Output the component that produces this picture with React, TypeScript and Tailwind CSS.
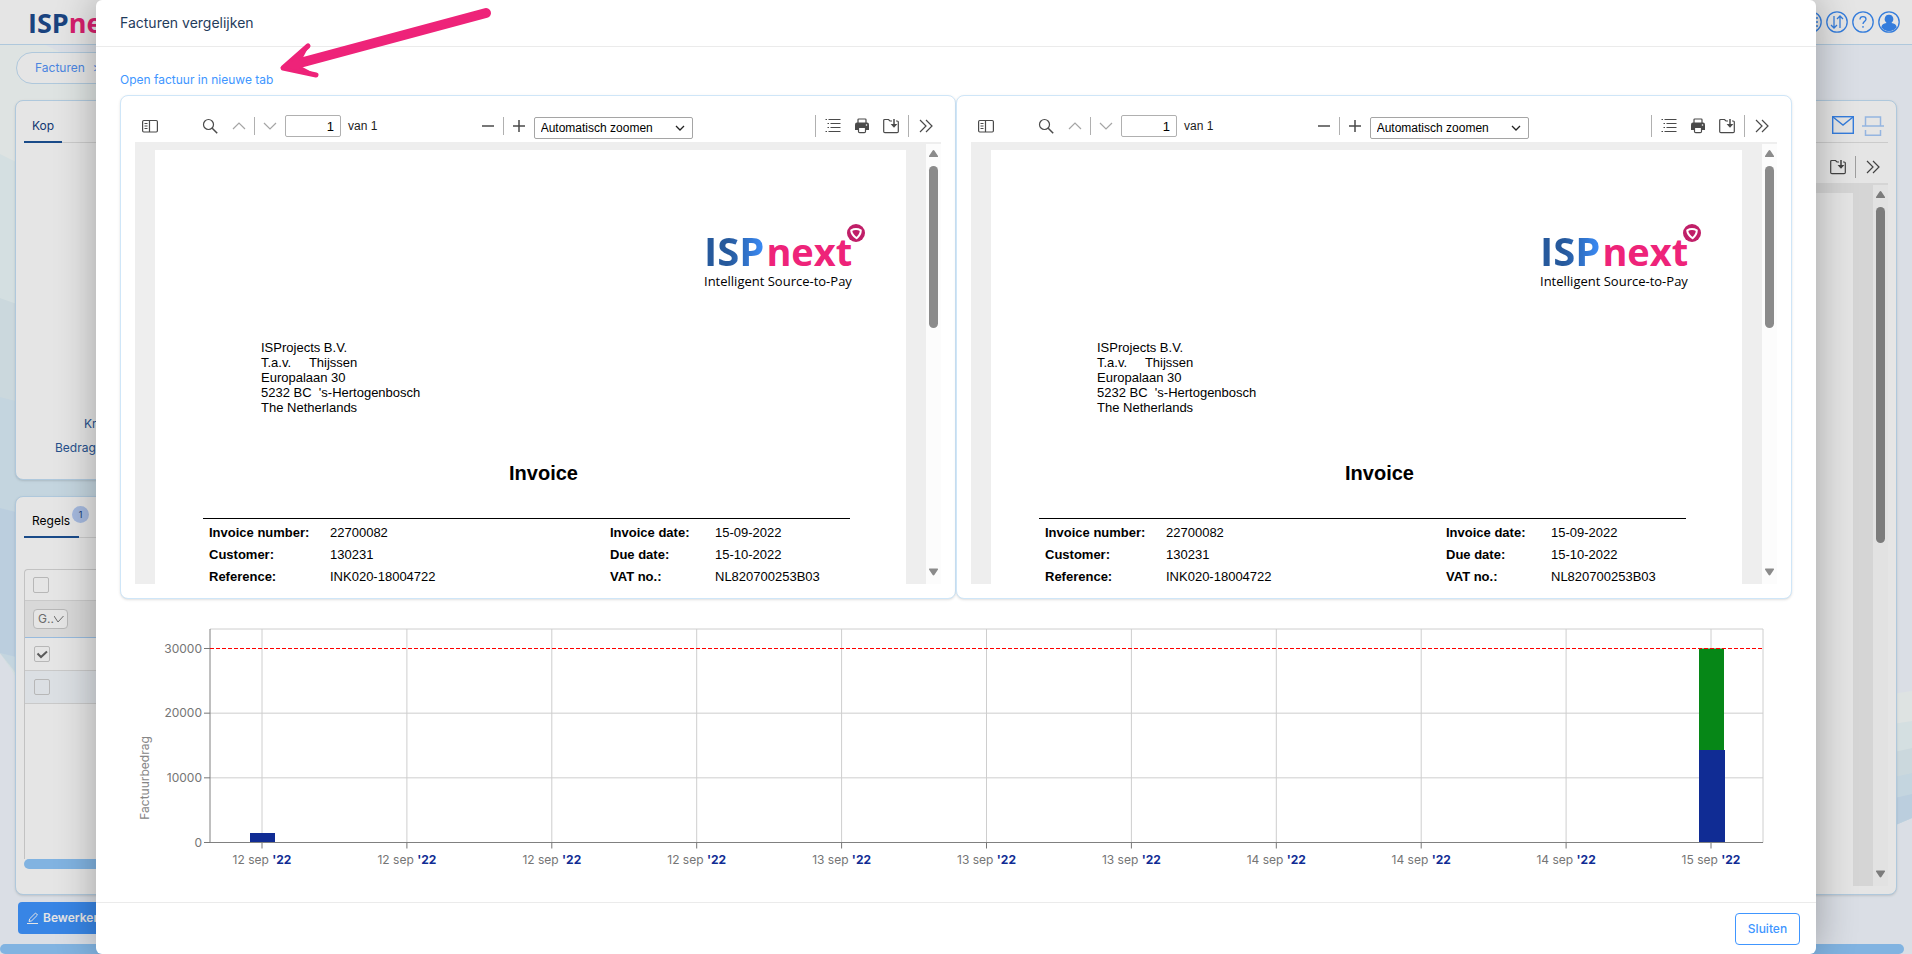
import { useId } from "react"
import type { ReactNode } from "react"

const CHART = { left: 90, right: 1643, top: 18, base: 231.5, step: 194 / 3 }

const TICKS = ["12", "12", "12", "12", "13", "13", "13", "14", "14", "14", "15"]

const ADDRESS = [
  "ISProjects B.V.",
  "T.a.v.     Thijssen",
  "Europalaan 30",
  "5232 BC  's-Hertogenbosch",
  "The Netherlands",
]

const DETAILS = [
  ["Invoice number:", "22700082", "Invoice date:", "15-09-2022"],
  ["Customer:", "130231", "Due date:", "15-10-2022"],
  ["Reference:", "INK020-18004722", "VAT no.:", "NL820700253B03"],
]

interface IconProps {
  children: ReactNode
  className?: string
}

/** 16px stroked icon as used in the pdf toolbar */
function Icon({ children, className = "h-4 w-4 text-[#4a4a4a]" }: IconProps) {
  return (
    <svg viewBox="0 0 16 16" fill="none" stroke="currentColor" strokeWidth="1.2" className={className} aria-hidden="true">
      {children}
    </svg>
  )
}

function ChevronsIcon() {
  return (
    <Icon>
      <path d="M2 2l6 6-6 6M8 2l6 6-6 6" />
    </Icon>
  )
}

function SaveIcon() {
  return (
    <Icon>
      <path d="M9 3H7L5.500 1.500H1.700Q.7 1.500.7 2.500v11q0 1.200 1.200 1.200h12.200q1.200 0 1.200-1.200V4.200Q15.300 3 14.100 3H13" />
      <path d="M11 1v7" strokeWidth="1.500" />
      <path d="M7.600 6h6.800L11 9.800z" fill="currentColor" stroke="none" />
    </Icon>
  )
}

function ToolButton({ label, children }: { label: string; children: ReactNode }) {
  return (
    <button type="button" aria-label={label} className="flex h-6 w-4 shrink-0 items-center justify-center">
      {children}
    </button>
  )
}

function Separator({ className = "h-[18px]" }: { className?: string }) {
  return <span className={`w-px shrink-0 bg-[#b0b0b0] ${className}`} />
}

/** Scroll track with arrows, thumb size is passed in as a class */
function ScrollTrack({ thumb }: { thumb: string }) {
  return (
    <div className="mt-0.5 flex w-[15px] shrink-0 flex-col items-center justify-between bg-[#fcfcfc] pt-1.5 pb-2">
      <div className="flex flex-col items-center gap-2">
        <svg viewBox="0 0 9 8" className="h-2 w-[9px]" aria-hidden="true">
          <path d="M4.500 0Q5 0 5.500.8L9 6v.5q0 .5-.5.5h-8Q0 7 0 6.500V6L3.500.8Q4 0 4.500 0z" fill="#8b8b8b" />
        </svg>
        <div className={`w-[9px] rounded-full bg-[#8b8b8b] ${thumb}`} />
      </div>
      <svg viewBox="0 0 9 8" className="h-2 w-[9px]" aria-hidden="true">
        <path d="M4.500 7.500Q5 7.500 5.500 6.700L9 1.500V1Q9 .5 8.500.5h-8Q0 .5 0 1v.5l3.500 5.200Q4 7.500 4.500 7.500z" fill="#8b8b8b" />
      </svg>
    </div>
  )
}

function InvoiceLogo() {
  return (
    <div className="relative w-[165px] pt-[9px] font-['Open_Sans']">
      <div className="flex items-baseline gap-0.5 font-bold">
        <span className="bg-linear-to-r from-[#26599c] from-40% to-[#3b8cf8] bg-clip-text text-[40px] leading-10 text-transparent">
          ISP
        </span>
        <span className="text-[38px] leading-10 text-[#ee2379]">next</span>
      </div>
      <p className="mt-0.5 text-[13px] leading-4 font-medium">Intelligent Source-to-Pay</p>
      <svg viewBox="0 0 18 18" className="absolute top-0.5 right-1 h-[18px] w-[18px]" aria-hidden="true">
        <circle cx="9" cy="9" r="9" fill="#c01f68" />
        <path d="M4.200 6.300q4.800-2.400 9.600 0 0 4.500-4.200 8-5-3.500-5.400-8z" fill="none" stroke="#fff" strokeWidth="2" strokeLinejoin="round" />
      </svg>
    </div>
  )
}

/** Toolbar above the previewed document */
function PdfToolbar() {
  const pageId = useId()
  return (
    <div className="flex h-8 items-center justify-between px-[7px] font-['Liberation_Sans',sans-serif] text-[12px] text-[#1c1c1c]">
      <div className="flex items-center">
        <ToolButton label="Zijbalk">
          <Icon>
            <rect x=".6" y="2.500" width="14.800" height="11.500" rx="1.200" />
            <path d="M7.500 2.500V14M2.500 5.500h3M2.500 8h3M2.500 10.500h3" />
          </Icon>
        </ToolButton>
        <div className="ml-11 flex items-center gap-[13px]">
          <ToolButton label="Zoeken">
            <Icon>
              <circle cx="6.500" cy="6.500" r="5" />
              <path d="M10.200 10.200l5 5" strokeWidth="1.500" />
            </Icon>
          </ToolButton>
          <ToolButton label="Vorige">
            <Icon className="h-4 w-4 text-[#a5a5a5]">
              <path d="M2 11l6-6 6 6" />
            </Icon>
          </ToolButton>
        </div>
        <div className="ml-[7px] flex items-center gap-[7px]">
          <Separator />
          <ToolButton label="Volgende">
            <Icon className="h-4 w-4 text-[#a5a5a5]">
              <path d="M2 5l6 6 6-6" />
            </Icon>
          </ToolButton>
          <input
            id={pageId}
            defaultValue="1"
            className="h-[22px] w-14 rounded-xs border border-[#b0b0b0] px-1.5 text-right text-[13px] text-black"
          />
          <label htmlFor={pageId}>van 1</label>
        </div>
      </div>
      <div className="mr-5 flex items-center gap-[7px]">
        <ToolButton label="Uitzoomen">
          <Icon>
            <path d="M2 8h12" strokeWidth="1.500" />
          </Icon>
        </ToolButton>
        <Separator />
        <ToolButton label="Inzoomen">
          <Icon>
            <path d="M2 8h12M8 2v12" strokeWidth="1.500" />
          </Icon>
        </ToolButton>
        <div className="relative mt-1">
          <select
            aria-label="Zoom"
            className="block h-[22px] w-[159px] appearance-none rounded-xs border border-[#a5a5a5] bg-white pl-1.5 text-[12px] text-black"
          >
            <option>Automatisch zoomen</option>
          </select>
          <svg viewBox="0 0 10 6" className="absolute top-2 right-2 h-1.5 w-2.5" fill="none" stroke="#222" strokeWidth="1.300" aria-hidden="true">
            <path d="M1 1l4 4 4-4" />
          </svg>
        </div>
      </div>
      <div className="flex items-center gap-[9px]">
        <Separator className="h-[22px]" />
        <ToolButton label="Lijst">
          <Icon>
            <path d="M3.500 1.500h12M5.500 5.500h10M5.500 9.500h10M3.500 13.500h12" />
            <path d="M.5 1.500h1.500M2.500 5.500H4M2.500 9.500H4M.5 13.500h1.500" />
          </Icon>
        </ToolButton>
        <span className="mx-1 flex items-center">
          <ToolButton label="Afdrukken">
            <Icon>
              <path d="M4 5V1.800q0-.8.8-.8h6.400q.8 0 .8.800V5" fill="white" />
              <path d="M3 4.500h10q2 0 2 2V12H1V6.500q0-2 2-2z" fill="currentColor" stroke="none" />
              <path d="M4.500 9.500v4q0 1.200 1.200 1.200h4.600q1.200 0 1.200-1.200v-4z" fill="white" />
              <circle cx="12.500" cy="7" r=".8" fill="#fff" stroke="none" />
            </Icon>
          </ToolButton>
        </span>
        <ToolButton label="Opslaan">
          <SaveIcon />
        </ToolButton>
        <Separator className="h-[22px]" />
        <ToolButton label="Meer">
          <ChevronsIcon />
        </ToolButton>
      </div>
    </div>
  )
}

function InvoicePreview() {
  return (
    <section className="min-w-0 flex-1 rounded-lg border border-[#cfe6f8] bg-white p-3.5 shadow-sm">
      <PdfToolbar />
      <div className="flex h-[442px] overflow-hidden bg-[#eeeeee] pl-5">
        <article className="mt-2 mr-5 flex-1 bg-white font-['Liberation_Sans',sans-serif] text-[13px] leading-[15px] text-black">
          <div className="flex h-36 justify-end pt-[72px] pr-[37px]">
            <InvoiceLogo />
          </div>
          <address className="mt-[46px] ml-[106px] whitespace-pre not-italic">
            {ADDRESS.map((line) => (
              <div key={line}>{line}</div>
            ))}
          </address>
          <h2 className="mt-11 pl-[26px] text-center text-xl font-bold">Invoice</h2>
          <div className="mr-14 ml-12 mt-[31px] border-t border-black pt-[3px]">
            <table className="w-full text-left leading-4">
              <tbody>
                {DETAILS.map((row) => (
                  <tr key={row[0]}>
                    <th className="w-[127px] px-0 py-[3px] pl-1.5 font-bold">{row[0]}</th>
                    <td className="w-[280px] px-0 py-[3px]">{row[1]}</td>
                    <th className="w-[105px] px-0 py-[3px] font-bold">{row[2]}</th>
                    <td className="px-0 py-[3px]">{row[3]}</td>
                  </tr>
                ))}
              </tbody>
            </table>
          </div>
        </article>
        <ScrollTrack thumb="h-[162px]" />
      </div>
    </section>
  )
}

/** Stacked bar chart with invoice amounts per moment */
function AmountChart() {
  const y = (amount: number) => CHART.base - (amount / 10000) * CHART.step
  const x = (index: number) => 142 + index * 144.9
  return (
    <svg viewBox="0 0 1672 270" className="w-full font-['Inter',sans-serif]" fontSize="12" role="img" aria-label="Factuurbedrag">
      {/* grid */}
      <g stroke="#cecece">
        <path d={`M${CHART.left} ${CHART.top}H${CHART.right}V${CHART.base}`} fill="none" />
        {[10000, 20000].map((v) => (
          <path key={v} d={`M${CHART.left} ${y(v)}H${CHART.right}`} />
        ))}
        {TICKS.map((_, i) => (
          <path key={i} d={`M${x(i)} ${CHART.top}V${CHART.base}`} />
        ))}
      </g>

      {/* bars */}
      <rect x={130} y={222} width={25} height={CHART.base - 222} fill="#102c94" />
      <rect x={1579} y={y(30000)} width={25} height={102} fill="#068717" />
      <rect x={1579} y={139} width={26} height={CHART.base - 139} fill="#102c94" />

      {/* axes */}
      <path d={`M${CHART.left} ${CHART.top}V${CHART.base}H${CHART.right}`} fill="none" stroke="#808080" />
      <path d={`M${CHART.left} ${y(30000)}H${CHART.right}`} stroke="#ff0000" strokeDasharray="4 2" />

      {[0, 10000, 20000, 30000].map((v) => (
        <g key={v}>
          <path d={`M${CHART.left - 6} ${y(v)}h6`} stroke="#777" />
          <text x={CHART.left - 8} y={y(v) + 4} textAnchor="end" fill="#757575">
            {v}
          </text>
        </g>
      ))}
      {TICKS.map((day, i) => (
        <g key={i}>
          <path d={`M${x(i)} ${CHART.base}v6`} stroke="#777" />
          <text x={x(i)} y={CHART.base + 21} textAnchor="middle" fill="#757575">
            {day} sep{" "}
            <tspan fontWeight="700" fill="#102c94">
              '22
            </tspan>
          </text>
        </g>
      ))}
      <text transform="translate(29 167) rotate(-90)" textAnchor="middle" fill="#868686">
        Factuurbedrag
      </text>
    </svg>
  )
}

function Backdrop() {
  return (
    <>
      <svg viewBox="0 0 100 909" preserveAspectRatio="none" className="absolute top-[45px] left-0 h-[909px] w-[100px]" aria-hidden="true">
        <path d="M0 0h45l55 25v700L0 608z" fill="#f8fdfc" />
        <path d="M0 109l100 50v600L0 608z" fill="#edf9fb" />
        <path d="M0 253l100 36v450L0 608z" fill="#e3f1f6" />
        <path d="M0 352l100 26v350L0 608z" fill="#dbeef9" />
        <path d="M0 463l100 25v145L0 608z" fill="#d1e6f8" />
      </svg>
      <svg viewBox="0 0 40 140" className="absolute top-[690px] right-0 h-[140px] w-10" aria-hidden="true">
        <path d="M0 7l40-6v127L0 145z" fill="#f8fdfc" />
        <path d="M0 37l40-6v97L0 145z" fill="#edf9fb" />
        <path d="M0 67l40-9v70L0 145z" fill="#e3f1f6" />
        <path d="M0 92l40-9v45L0 145z" fill="#dbeef9" />
        <path d="M0 113l40-9v24L0 145z" fill="#d1e6f8" />
      </svg>
    </>
  )
}

const HEADER_ICONS = [
  { label: "Menu", shape: <path d="M6 11h12M10 7h8M10 15h8" /> },
  { label: "Wisselen", shape: <path d="M8 5v12M5 14l3 3 3-3M14 17V5M11 8l3-3 3 3" /> },
  { label: "Help", shape: <path d="M8 8.500q0-2.800 3-2.800t3 2.600c0 2.200-3 2-3 4.700M11 15v1.800" /> },
  {
    label: "Profiel",
    shape: (
      <path d="M11 4.500a3.300 3.600 0 0 1 2 6.700q-.2 1.400 1.400 1.700 3.200.6 3.600 3.300a9 9 0 0 1-14 0q.4-2.700 3.600-3.300 1.600-.3 1.400-1.700a3.300 3.600 0 0 1 2-6.700z" fill="currentColor" />
    ),
  },
]

/** Invoice page that stays visible beside the dialog */
function InvoicePage() {
  return (
    <div className="relative flex h-full flex-col bg-[#f3f8ff]">
      <Backdrop />
      <header className="relative flex h-[45px] shrink-0 items-center justify-between border-b border-[#c3dff5] bg-white pr-3 pl-7 font-['Open_Sans']">
        <div className="text-[27px] leading-none font-bold text-[#1d4b8e]">
          ISP<span className="text-[#ee2379]">next</span>
        </div>
        <div className="flex gap-1">
          {HEADER_ICONS.map((icon) => (
            <button key={icon.label} type="button" aria-label={icon.label} className="text-[#3a8bf5]">
              <svg viewBox="0 0 22 22" fill="none" stroke="currentColor" strokeWidth="1.300" className="h-[22px] w-[22px]" aria-hidden="true">
                <circle cx="11" cy="11" r="10.200" />
                {icon.shape}
              </svg>
            </button>
          ))}
        </div>
      </header>

      <nav className="relative mt-[7px] ml-4 flex h-8 w-1/2 shrink-0 items-center gap-2 rounded-full border border-[#c3dff5] bg-white pl-[18px] text-[12px] text-[#5495fa]">
        <a href="#facturen">Facturen</a>
        <span>&gt;</span>
      </nav>

      <main className="relative mx-[15px] mt-4 flex flex-1 gap-4">
        <div className="flex flex-1 flex-col gap-4">
          <section className="h-[380px] rounded-lg border border-[#c3dff5] bg-white px-2 pt-2.5 text-[12px] text-[#2b5a9c] shadow-sm">
            <div className="flex border-b border-[#e2e2e2]">
              <h2 className="-mb-px border-b-2 border-[#1d5499] px-2 py-1.5 leading-[18px] text-[#14407e]">Kop</h2>
            </div>
            <div className="mt-[269px] ml-[31px] leading-6">
              <p className="ml-[29px]">Kredietbeperking</p>
              <p>Bedrag</p>
            </div>
          </section>
          <section className="flex flex-1 flex-col rounded-lg border border-[#c3dff5] bg-white px-2 pt-[9px] pb-[25px] text-[12px] text-black shadow-sm">
            <div className="flex border-b border-[#e2e2e2]">
              <h2 className="-mb-px flex border-b-2 border-[#1d5499] py-1.5 pl-2 leading-[18px]">
                Regels
                <span className="-mt-1.5 -mr-2.5 ml-0.5 h-[17px] w-[17px] rounded-full bg-[#b8cff8] text-center text-[9px] leading-[17px] text-[#14407e]">
                  1
                </span>
              </h2>
            </div>
            <div className="mt-[31px] flex-1 overflow-hidden rounded-t-sm border-t border-l border-[#d8d8d8]">
              <div className="flex h-[31px] items-center border-b border-[#e0e0e0] pl-2">
                <input type="checkbox" aria-label="Alles" className="h-4 w-4 appearance-none rounded-xs border border-[#ccc]" />
              </div>
              <div className="flex h-[37px] items-center border-b border-[#a9d0f7] bg-[#f1f1f1] pl-2">
                <button type="button" className="flex h-5 w-[35px] items-center rounded border border-[#ccc] bg-white pl-1 text-[#777]">
                  G..
                  <svg viewBox="0 0 10 8" className="h-2 w-2.5" fill="none" stroke="currentColor" aria-hidden="true">
                    <path d="M0 1l4 6 5.500-6" />
                  </svg>
                </button>
              </div>
              <div className="flex h-[33px] items-center border-b border-[#e0e0e0] pl-[9px]">
                <span className="relative flex">
                  <input type="checkbox" aria-label="Regel 1" defaultChecked className="h-4 w-4 appearance-none rounded-xs border border-[#ccc]" />
                  <svg viewBox="0 0 16 16" className="absolute inset-0" fill="none" stroke="#666" strokeWidth="2" aria-hidden="true">
                    <path d="M3.500 7.500l3.500 3.500 6-5.500" />
                  </svg>
                </span>
              </div>
              <div className="flex h-[33px] items-center border-b border-[#e0e0e0] bg-[#f4f9fd] pl-[9px]">
                <input type="checkbox" aria-label="Regel 2" className="h-4 w-4 appearance-none rounded-xs border border-[#ccc]" />
              </div>
            </div>
            <div className="h-2.5 rounded-full bg-[#90c8fb]" />
          </section>
        </div>

        <section className="flex flex-1 flex-col rounded-lg border border-[#c3dff5] bg-white px-2 pb-2 shadow-sm">
          <div className="flex h-[42px] items-end justify-end gap-2 border-b border-[#e2e2e2] pr-1 pb-1.5">
            <svg viewBox="0 0 22 18" className="mb-0.5 h-[18px] w-[22px]" fill="none" stroke="#3a8bf5" strokeWidth="1.400" aria-hidden="true">
              <rect x=".7" y=".7" width="20.600" height="16.600" />
              <path d="M1 1l10 8 10-8" />
            </svg>
            <svg viewBox="0 0 22 20" className="h-5 w-[22px]" fill="none" stroke="#a6cafa" strokeWidth="1.500" aria-hidden="true">
              <path d="M0 10h22M3.500 10V1h15v9M3.500 14v5.200h15V14" />
            </svg>
          </div>
          <div className="flex h-10 items-center justify-end gap-[9px] pt-2 pr-[7px]">
            <ToolButton label="Opslaan document">
              <SaveIcon />
            </ToolButton>
            <Separator className="h-[22px]" />
            <ToolButton label="Meer opties">
              <ChevronsIcon />
            </ToolButton>
          </div>
          <div className="flex flex-1 bg-[#eeeeee]">
            <div className="mt-2.5 mr-5 flex-1 bg-white" />
            <ScrollTrack thumb="h-[336px]" />
          </div>
        </section>
      </main>

      <footer className="relative shrink-0 pt-[7px]">
        <button type="button" className="ml-[18px] flex h-8 items-center gap-1 rounded bg-[#3f95ff] px-[9px] text-[12px] font-semibold text-white">
          <svg viewBox="0 0 12 12" className="h-3 w-3" fill="none" stroke="currentColor" aria-hidden="true">
            <path d="M0 11.500h11M2 9.500l.7-2.700L8.500 1l2 2-5.800 5.800z" />
          </svg>
          Bewerken
        </button>
        <div className="mt-2.5 mr-2 h-2.5 rounded-full bg-[#90c8fb]" />
      </footer>
      <div className="absolute inset-0 bg-black/10" />
    </div>
  )
}

export default function App() {
  return (
    <div className="relative h-screen overflow-hidden font-['Inter',sans-serif]">
      <InvoicePage />

      {/* Compare dialog */}
      <div
        role="dialog"
        aria-labelledby="dialog-title"
        className="absolute inset-y-0 right-24 left-24 flex flex-col rounded-md bg-white shadow-[0_0_40px_rgba(0,0,0,0.3)]"
      >
        <header className="flex h-[47px] shrink-0 items-center border-b border-[#ebebeb] px-6">
          <h1 id="dialog-title" className="text-sm text-[#1f3c5c]">
            Facturen vergelijken
          </h1>
        </header>

        <div className="flex-1 px-6 pt-6">
          <a href="#factuur" className="mb-1.5 block w-fit text-[12px] leading-[18px] text-[#4096ff]">
            Open factuur in nieuwe tab
          </a>
          <div className="flex">
            <InvoicePreview />
            <InvoicePreview />
          </div>
          <div className="pt-3">
            <AmountChart />
          </div>
        </div>

        <footer className="flex h-[52px] shrink-0 items-center justify-end border-t border-[#ebebeb] px-4">
          <button type="button" className="h-8 w-[65px] rounded border border-[#4096ff] text-[12px] font-medium text-[#4096ff]">
            Sluiten
          </button>
        </footer>

        {/* Pointer to the link */}
        <svg viewBox="0 0 220 76" className="absolute top-1 left-[182px] h-[76px] w-[220px]" fill="none" stroke="#ee2379" strokeLinecap="round" strokeLinejoin="round" aria-hidden="true">
          <path d="M208 9L18 60" strokeWidth="10" />
          <path d="M30 42L5 64l33 7" strokeWidth="5" />
          <path d="M5 64l25-22-8 15v6l15 8z" fill="#ee2379" strokeWidth="2" />
        </svg>
      </div>
    </div>
  )
}
